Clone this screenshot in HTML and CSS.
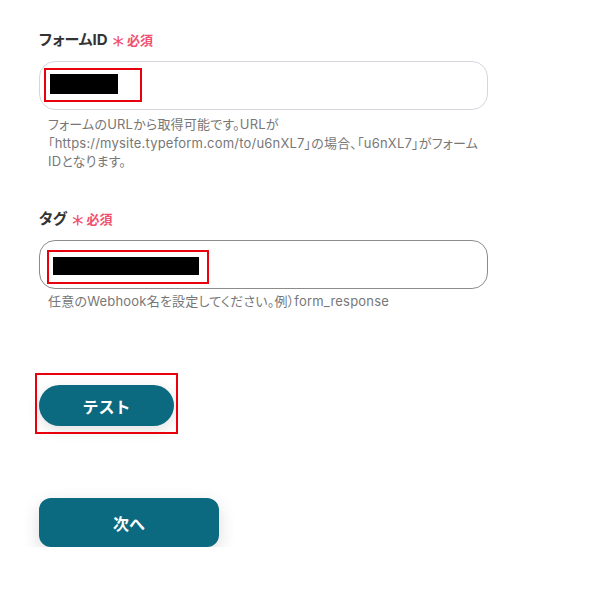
FILE: index.html
```html
<!DOCTYPE html>
<html lang="ja">
<head>
<meta charset="utf-8">
<link rel="stylesheet" href="styles.css">
</head>
<body>
<main class="form">
  <section class="field field-first">
    <div class="label">フォームID<span class="req"><span class="ast">*</span>必須</span></div>
    <div class="input input-light">
      <div class="mark mark-1"><div class="redact redact-1"></div></div>
    </div>
    <p class="help">フォームのURLから取得可能です。URLが「https://mysite.typeform.com/to/u6nXL7」の場合、「u6nXL7」がフォームIDとなります。</p>
  </section>
  <section class="field field-second">
    <div class="label">タグ<span class="req"><span class="ast">*</span>必須</span></div>
    <div class="input input-dark">
      <div class="mark mark-2"><div class="redact redact-2"></div></div>
    </div>
    <p class="help">任意のWebhook名を設定してください。例）form_response</p>
  </section>
  <div class="test-wrap">
    <button class="btn btn-test">テスト</button>
    <div class="test-mark"></div>
  </div>
  <button class="btn btn-next">次へ</button>
</main>
</body>
</html>
```

FILE: styles.css
```css
* { box-sizing: border-box; }
html, body { margin: 0; padding: 0; background: #fff; }
body {
  font-family: Inter, "Noto Sans CJK JP", sans-serif;
  color: #333;
}
.form {
  padding: 30px 0 0 39px;
  width: 598px;
}
.field { width: 449px; }
.field-second { margin-top: 38px; }
.label {
  font-size: 15px;
  font-weight: 700;
  line-height: 20px;
  height: 20px;
  color: #333;
  display: flex;
  align-items: center;
  font-feature-settings: "palt";
}
.req {
  color: #f0506e;
  font-size: 13px;
  font-weight: 700;
  margin-left: 5px;
  display: inline-flex;
  align-items: center;
}
.ast {
  font-family: "DejaVu Sans", sans-serif;
  font-size: 23px;
  line-height: 20px;
  font-weight: 400;
  margin-right: 3px;
  position: relative;
  top: 5px;
}
.input {
  margin-top: 11px;
  height: 49px;
  border-radius: 16px;
  background: #fff;
  position: relative;
}
.input-light { border: 1px solid #d3d7dd; }
.input-dark { border: 1px solid #8c8c8c; }
.mark {
  position: absolute;
  border: 2px solid #e8000c;
}
.mark-1 { left: 4px; top: 6px; width: 98px; height: 34px; }
.mark-2 { left: 7px; top: 9px; width: 162px; height: 34px; }
.redact { position: absolute; background: #000; }
.redact-1 { left: 4px; top: 4px; width: 68px; height: 20px; }
.redact-2 { left: 4px; top: 5px; width: 146px; height: 18px; }
.help {
  margin: 5px 0 0;
  padding: 0 7px 0 9px;
  font-size: 13px;
  line-height: 18.5px;
  letter-spacing: 0.2px;
  font-feature-settings: "palt";
  color: #777;
}
.field-second .help { margin-top: 3px; }
.btn {
  display: flex;
  align-items: center;
  justify-content: center;
  border: none;
  background: #0c6a80;
  color: #fff;
  font-family: Inter, "Noto Sans CJK JP", sans-serif;
  font-weight: 700;
  font-size: 16px;
  padding: 0;
}
.test-wrap {
  position: relative;
  margin-top: 75px;
  width: 135px;
}
.btn-test {
  width: 135px;
  height: 41px;
  border-radius: 21px;
  box-shadow: 0 4px 14px rgba(0, 0, 0, 0.12);
}
.test-mark {
  position: absolute;
  left: -4px;
  top: -12px;
  width: 143px;
  height: 61px;
  border: 2px solid #e8000c;
}
.btn-next {
  margin-top: 72px;
  width: 180px;
  height: 49px;
  border-radius: 12px;
  box-shadow: 0 6px 18px rgba(0, 0, 0, 0.14);
}
```
